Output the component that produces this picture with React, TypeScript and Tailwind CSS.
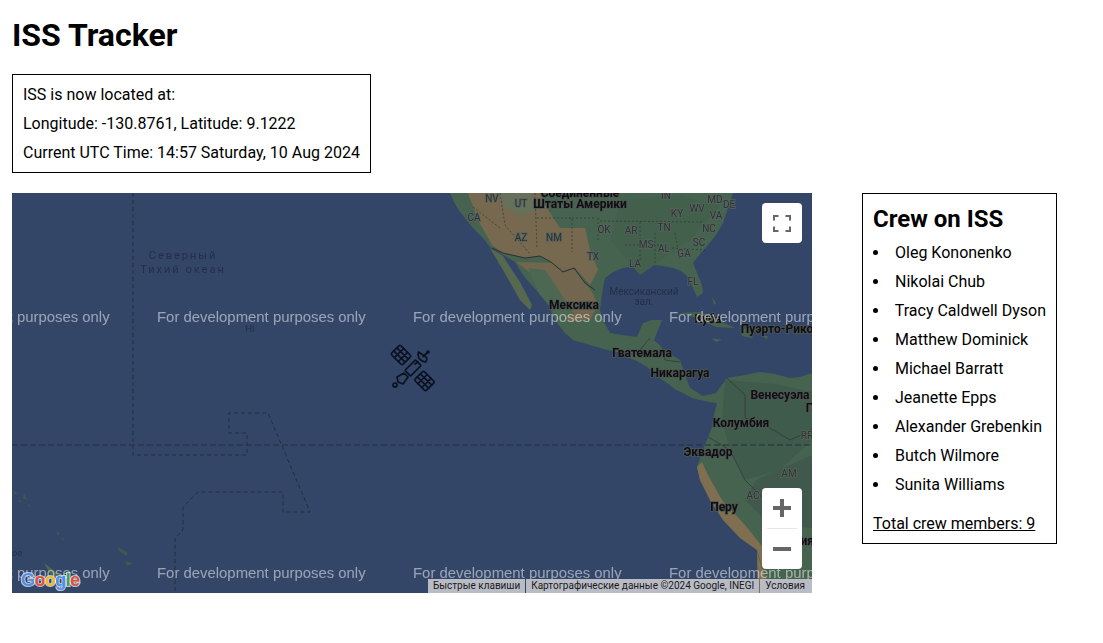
import React from 'react';

const crew = [
  'Oleg Kononenko',
  'Nikolai Chub',
  'Tracy Caldwell Dyson',
  'Matthew Dominick',
  'Michael Barratt',
  'Jeanette Epps',
  'Alexander Grebenkin',
  'Butch Wilmore',
  'Sunita Williams',
];

// map labels, page coordinates (the svg viewBox starts at the map's corner)
const stateLabels: [string, number, number][] = [
  ['NV', 492, 198], ['UT', 521, 203], ['CA', 474, 217], ['AZ', 521, 237], ['NM', 554, 237],
  ['OK', 604, 229], ['AR', 631, 230], ['KY', 677, 213], ['WV', 697, 208], ['MD', 715, 199],
  ['DE', 729, 204], ['VA', 716, 215], ['TN', 664, 227], ['NC', 709, 228], ['SC', 699, 242],
  ['MS', 646, 244], ['AL', 664, 248], ['GA', 684, 253], ['LA', 635, 263], ['TX', 593, 256],
  ['FL', 693, 281], ['IN', 666, 195], ['AM', 789, 473], ['AC', 753, 495], ['RR', 807, 435],
];

const countryLabels: [string, number, number][] = [
  ['Соединенные', 580, 193], ['Штаты Америки', 580, 204], ['Мексика', 574, 305], ['Куба', 708, 319],
  ['Пуэрто-Рико', 777, 329], ['Гватемала', 642, 353], ['Никарагуа', 680, 373], ['Венесуэла', 780, 395],
  ['Колумбия', 741, 423], ['Эквадор', 708, 452], ['Перу', 724, 507], ['Боливия', 790, 541], ['Гайана', 825, 408],
];

const watermarks: [number, number][] = [
  [-99, 317], [157, 317], [413, 317], [669, 317],
  [-99, 573], [157, 573], [413, 573], [669, 573],
];

const panelGrid = 'M-8 -2.2 H8 M-8 2.2 H8 M-2.7 -6.5 V6.5 M2.7 -6.5 V6.5';

const SatelliteMarker = () => (
  <g fill="none" stroke="#0b1120" strokeWidth="1.7" strokeLinejoin="round" strokeLinecap="round">
    <g transform="translate(401 355) rotate(45)">
      <rect x="-8" y="-6.5" width="16" height="13" rx="1.5" />
      <path d={panelGrid} />
    </g>
    <g transform="translate(424.5 381) rotate(45)">
      <rect x="-8" y="-6.5" width="16" height="13" rx="1.5" />
      <path d={panelGrid} />
    </g>
    <g transform="translate(413 368) rotate(-45)">
      <rect x="-7.5" y="-4" width="15" height="8" rx="1" />
    </g>
    <path d="M404 373 L408 377 L403 384 L398 382 L397 377 Z" />
    <circle cx="395" cy="385" r="2" />
    <path d="M418.5 352 C417 356 419 361 425.5 362 C427 360 427 358 426 357 Z" />
    <path d="M423 356.5 L427.5 352.5 M418 362 L415 364" />
    <circle cx="428" cy="352" r="1" />
  </g>
);

const MapCanvas = () => (
  <svg viewBox="12 193 800 400" className="absolute inset-0 h-full w-full blur-[0.35px]">
    {/* land */}
    <path
      d="M450 193 L455 204 L460 212 L473 228 L483 238 L490 247 L503 255 L515 262 L521 272 L527 280 L537 291 L547 302 L552 313 L557 323 L565 333 L573 340 L590 345 L607 350 L617 352 L627 357 L637 361 L647 367 L657 376 L667 383 L676 390 L683 393 L692 398 L700 400 L709 402 L717 403 L714 415 L712 427 L708 437 L702 452 L697 467 L700 480 L710 500 L723 520 L740 538 L757 550 L758 593 L812 593 L812 373 L800 377 L790 378 L775 374 L760 372 L745 375 L727 378 L716 393 L703 396 L690 388 L684 372 L680 360 L672 355 L665 350 L654 340 L658 330 L662 320 L652 320 L643 323 L637 337 L622 335 L610 333 L604 322 L600 310 L602 293 L605 278 L613 272 L623 268 L640 265 L653 265 L663 266 L673 268 L681 271 L688 277 L693 288 L697 297 L703 293 L702 285 L693 263 L700 254 L708 245 L716 235 L723 223 L728 208 L733 193 Z"
      fill="#466350"
    />
    <path d="M490 248 L503 256 L512 270 L520 282 L532 305 L530 310 L520 300 L507 277 Z" fill="#56694f" />
    {/* dry areas */}
    <path
      d="M468 193 L478 220 L492 245 L503 253 L525 258 L540 256 L552 263 L563 272 L575 268 L590 285 L598 270 L590 250 L585 228 L560 228 L545 205 L540 193 Z"
      fill="#776950"
    />
    <path d="M516 262 L552 263 L575 270 L592 292 L598 305 L590 320 L570 322 L555 305 L540 280 Z" fill="#72664e" />
    <path d="M528 268 L545 270 L565 300 L575 315 L560 318 L540 295 Z" fill="#4d6852" />
    <path d="M497 193 L530 193 L540 210 L520 216 L505 207 Z" fill="#67705a" />
    <path d="M697 467 L700 480 L710 500 L723 520 L740 538 L757 550 L770 593 L757 593 L765 550 L745 525 L722 500 L708 475 L702 462 Z" fill="#7f6e50" />
    <path d="M758 593 L757 552 L764 575 L780 593 Z" fill="#7f6e50" />
    {/* darker forest */}
    <path d="M725 380 L775 384 L812 392 L812 440 L780 470 L745 480 L730 450 L722 420 Z" fill="#3f5b4b" />
    <path d="M756 480 L812 455 L812 528 L770 525 L745 500 Z" fill="#41594c" />
    <path d="M640 275 L690 240 L720 205 L680 195 L620 200 L610 240 Z" fill="#43604d" />
    {/* caribbean */}
    <path d="M680 313 L700 312 L722 322 L735 328 L716 327 L696 318 Z" fill="#466350" />
    <path d="M740 328 L755 330 L752 338 L742 336 Z" fill="#466350" />
    <path d="M712 338 L722 340 L716 342 Z" fill="#466350" />
    <path d="M762 336 L768 336 L767 339 Z" fill="#466350" />
    <path d="M712 297 L716 303 L714 305 Z" fill="#466350" />
    {/* pacific islands */}
    <path d="M118 547 L128 553 L126 556 L118 550 Z M125 561 L133 563 L127 566 Z" fill="#41584f" />
    <path d="M13 490 L18 494 L14 494 Z M24 493 L27 500 L23 498 Z M19 500 L23 502 L19 502 Z M28 504 L31 507 L28 506 Z M57 531 L60 534 L57 535 Z M62 537 L64 540 L62 540 Z" fill="#41584f" />
    <path d="M44 563 L56 572 L62 580 L50 574 Z" fill="#4d6a4e" />
    {/* borders */}
    <path
      d="M492 248 L503 253 L525 258 L540 256 L551 262 L563 272 L574 268 L585 283 L595 290"
      fill="none" stroke="#2c2f30" strokeWidth="1"
    />
    <path
      d="M650 338 L640 350 L655 353 M662 348 L665 360 L680 362 M727 378 L745 395 L745 418 L770 428 M708 437 L730 450 L745 480 M745 480 L765 500 M770 428 L790 440 L812 430"
      fill="none" stroke="#2f3a3a" strokeWidth="0.8"
    />
    <path
      d="M473 207 L500 228 M500 193 L505 225 L531 255 M535 193 L537 248 M537 218 L572 218 L572 252 M572 218 L595 218 M598 218 L598 240 M600 221 L702 222 M640 222 L640 262 M655 233 L655 265 M675 233 L680 260 M672 248 L705 250 M625 245 L660 245"
      fill="none" stroke="#2b3632" strokeWidth="0.7" strokeDasharray="2 2"
    />
    <path
      d="M133 193 L133 455 L247 455 L247 433 L229 433 L229 413 L268 413 L310 512 L283 512 L283 492 L198 492 L183 507 L183 530 L175 538 L175 593"
      fill="none" stroke="#242c3c" strokeWidth="1" strokeDasharray="4 3"
    />
    <path d="M12 445 L812 445" fill="none" stroke="#242c3c" strokeWidth="1" strokeDasharray="6 3" />

    {/* labels */}
    <g fontFamily="Roboto, sans-serif" fontSize="10" textAnchor="middle">
      {stateLabels.map(([t, x, y]) => (
        <text key={t} x={x} y={y + 3.5} fill="#2a3431" stroke="#59625f" strokeWidth="1.6" paintOrder="stroke">{t}</text>
      ))}
    </g>
    <g fontFamily="Roboto, sans-serif" fontSize="12" fontWeight="700" textAnchor="middle">
      {countryLabels.map(([t, x, y]) => (
        <text key={t} x={x} y={y + 4} fill="#0e0f10" stroke="#4f5554" strokeWidth="1.6" paintOrder="stroke">{t}</text>
      ))}
    </g>
    <g fontFamily="Roboto, sans-serif" fontSize="10" fill="#232f48" textAnchor="middle">
      <text x="644" y="295">Мексиканский</text>
      <text x="644" y="305">зал.</text>
      <text x="183" y="259" fontSize="11" letterSpacing="2">Северный</text>
      <text x="183" y="273" fontSize="11" letterSpacing="2">Тихий океан</text>
      <text x="250" y="332" fontSize="9">HI</text>
      <text x="17" y="556" fontSize="9">oe</text>
    </g>

    <SatelliteMarker />

    {/* dev watermark */}
    <g fontFamily="'Liberation Sans', sans-serif" fontSize="14.9" fill="#ffffff" fillOpacity="0.5">
      {watermarks.map(([x, y]) => (
        <text key={`${x}-${y}`} x={x} y={y + 5}>For development purposes only</text>
      ))}
    </g>

    {/* google logo */}
    <text x="21" y="586" fontFamily="'Liberation Sans', sans-serif" fontSize="18" fontWeight="700" stroke="#ffffff" strokeOpacity="0.7" strokeWidth="2" paintOrder="stroke" letterSpacing="-0.6">
      <tspan fill="#4f8fe8">G</tspan>
      <tspan fill="#e0503f">o</tspan>
      <tspan fill="#f0b92c">o</tspan>
      <tspan fill="#4f8fe8">g</tspan>
      <tspan fill="#3fa65a">l</tspan>
      <tspan fill="#e0503f">e</tspan>
    </text>
  </svg>
);

const App = () => {
  return (
    <div className="min-h-[643px] bg-white px-3 pt-4 font-['Roboto',sans-serif] text-[16px] leading-[19px] text-black">
      <h1 className="mb-5 text-[32px] leading-[38px] font-bold">ISS Tracker</h1>

      <div className="mb-5 flex w-fit flex-col gap-2.5 border border-black p-2.5">
        <p>ISS is now located at:</p>
        <p>Longitude: -130.8761, Latitude: 9.1222</p>
        <p>Current UTC Time: 14:57 Saturday, 10 Aug 2024</p>
      </div>

      <div className="flex items-start gap-[50px]">
        {/* map */}
        <div className="relative h-[400px] w-[800px] shrink-0 overflow-hidden bg-[#334668]">
          <MapCanvas />

          <button className="absolute top-2.5 right-2.5 flex h-10 w-10 items-center justify-center rounded-sm bg-white">
            <svg width="18" height="17" viewBox="0 0 18 17" fill="none" stroke="#666666" strokeWidth="2">
              <path d="M1 5.5 V1 H5.5 M12.5 1 H17 V5.5 M17 11.5 V16 H12.5 M5.5 16 H1 V11.5" />
            </svg>
          </button>

          <div className="absolute right-2.5 bottom-6 flex w-10 flex-col items-center rounded-sm bg-white">
            <button className="flex h-10 w-10 items-center justify-center">
              <svg width="18" height="18" viewBox="0 0 18 18" fill="#666666">
                <path d="M7 0 H11 V7 H18 V11 H11 V18 H7 V11 H0 V7 H7 Z" />
              </svg>
            </button>
            <div className="h-px w-[30px] bg-[#e6e6e6]" />
            <button className="flex h-10 w-10 items-center justify-center">
              <svg width="18" height="4" viewBox="0 0 18 4" fill="#666666">
                <rect width="18" height="4" />
              </svg>
            </button>
          </div>

          <div className="absolute right-0 bottom-0 flex h-3.5 items-center text-[10px] leading-[14px] text-[#1a1a1a]">
            <span className="bg-[#b9bcc4] px-[5px]">Быстрые клавиши</span>
            <span className="ml-px bg-[#b9bcc4] px-[5px]">Картографические данные ©2024 Google, INEGI</span>
            <span className="ml-px bg-[#b9bcc4] py-0 pr-[7px] pl-[5px]">Условия</span>
          </div>
        </div>

        {/* crew */}
        <div className="w-[195px] shrink-0 border border-black p-2.5">
          <h2 className="mb-[9px] pt-px text-[24px] leading-[29px] font-bold">Crew on ISS</h2>
          <ul className="flex flex-col gap-2.5">
            {crew.map((name) => (
              <li key={name} className="flex items-center gap-[17px] whitespace-nowrap">
                <span className="h-[5px] w-[5px] rounded-full bg-black" />
                {name}
              </li>
            ))}
          </ul>
          <p className="mt-5 underline">Total crew members: 9</p>
        </div>
      </div>
    </div>
  );
};

export default App;
